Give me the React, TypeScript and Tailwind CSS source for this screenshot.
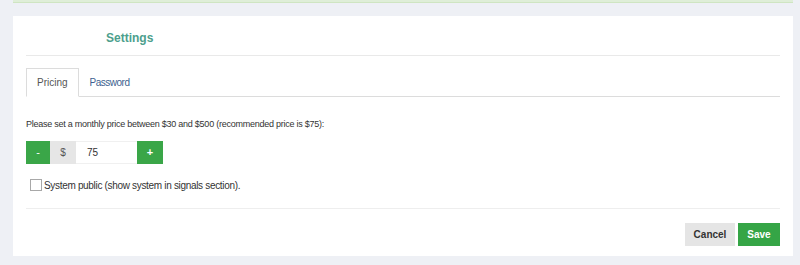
import React from "react";

export default function App() {
  const font = { fontFamily: '"Liberation Sans", Arial, sans-serif' };
  return (
    <div className="w-[800px] h-[265px] bg-[#eef0f5] pl-[13px] pr-[7px] overflow-hidden" style={font}>
      <div className="h-[3px] bg-[#dfeed8] border-b border-[#cfe5c2]" />
      <div className="mt-[13px] bg-white px-[13px] pb-[10px]">
        <div className="h-[40px] flex items-center border-b border-[#e9e9e9] pl-[80px] pt-[4px]">
          <span className="text-[12px] font-bold text-[#4d9f8d]">Settings</span>
        </div>
        <div className="mt-[12px] flex border-b border-[#dcdcdc] h-[29px]">
          <div className="h-[29px] -mb-px px-[10px] flex items-center border border-[#dcdcdc] border-b-white bg-white text-[10px] text-[#555]">
            Pricing
          </div>
          <div className="h-[28px] px-[11px] flex items-center text-[10px] tracking-[-0.5px] text-[#3d5f8f]">
            Password
          </div>
        </div>
        <div className="mt-[20px] text-[9px] tracking-[-0.25px] leading-[14px] text-[#333]">
          Please set a monthly price between $30 and $500 (recommended price is $75):
        </div>
        <div className="mt-[10px] flex h-[23px]">
          <div className="w-[24px] bg-[#3aa648] text-white text-[11px] flex items-center justify-center">-</div>
          <div className="w-[26px] bg-[#e6e6e6] text-[#555] text-[10px] flex items-center justify-center">$</div>
          <div className="w-[61px] bg-white border-y border-[#f0f0f0] text-[10px] text-[#333] flex items-center pl-[11px]">75</div>
          <div className="w-[26px] bg-[#3aa648] text-white text-[11px] font-bold flex items-center justify-center">+</div>
        </div>
        <div className="mt-[14px] flex items-center h-[14px] pl-[4px]">
          <div className="w-[12px] h-[12px] border border-[#a8a8a8] bg-white" />
          <span className="ml-[2px] text-[10px] tracking-[-0.32px] text-[#333]">System public (show system in signals section).</span>
        </div>
        <div className="mt-[16px] border-t border-[#eeeeee]" />
        <div className="mt-[14px] flex justify-end gap-[3px]">
          <div className="w-[50px] h-[23px] bg-[#e5e5e5] text-[#333] text-[10px] font-bold flex items-center justify-center">Cancel</div>
          <div className="w-[42px] h-[23px] bg-[#35a546] text-white text-[10px] font-bold flex items-center justify-center">Save</div>
        </div>
      </div>
    </div>
  );
}
